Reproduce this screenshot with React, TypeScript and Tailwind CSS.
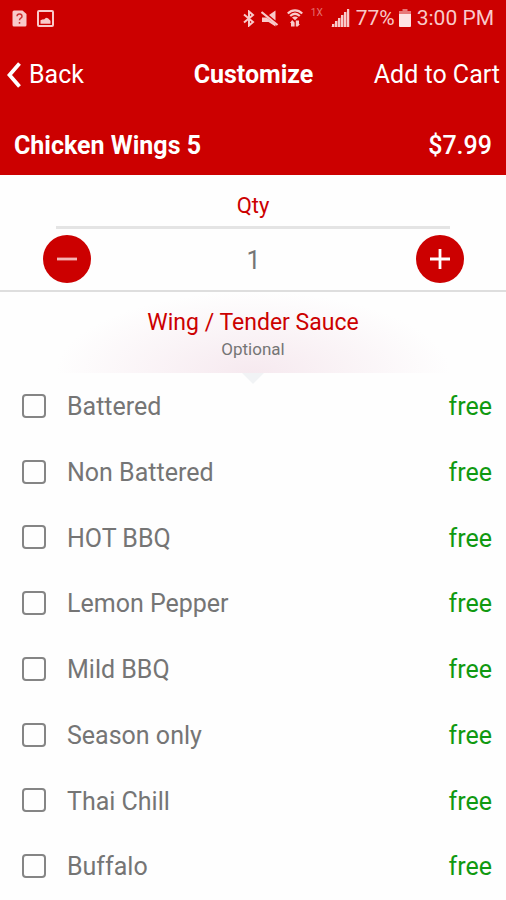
import { useState } from 'react';

const SAUCES = [
  'Battered',
  'Non Battered',
  'HOT BBQ',
  'Lemon Pepper',
  'Mild BBQ',
  'Season only',
  'Thai Chill',
  'Buffalo',
];

function StatusBar() {
  return (
    <div className="flex h-9 items-center justify-between px-3 text-[#f9caca]">
      <div className="flex items-center gap-2.5">
        {/* Unknown document */}
        <svg width="15" height="17" viewBox="0 0 15 17" fill="none">
          <path d="M2 0.5h8.5L14.500 4v11a1.500 1.500 0 0 1-1.500 1.500H2A1.500 1.500 0 0 1 .5 15V2A1.500 1.500 0 0 1 2 .5z" fill="currentColor" />
          <path d="M5 6.200a2.500 2.300 0 1 1 3.800 2c-.9.500-1.300.9-1.300 2M7.500 12v1.800" stroke="#cc3030" strokeWidth="1.500" />
        </svg>
        {/* Picture */}
        <svg width="17" height="17" viewBox="0 0 17 17" fill="none">
          <rect x="1" y="1" width="15" height="15" rx="1" stroke="currentColor" strokeWidth="2" />
          <path d="M3.500 13.800v-3.600l2.500-1 1 .3 2-1.800 2 .5 2.500 2.500v3.100z" fill="currentColor" />
        </svg>
      </div>
      <div className="flex items-center">
        {/* Bluetooth */}
        <svg className="mr-1.5" width="12" height="17" viewBox="0 0 12 17" fill="none" stroke="currentColor" strokeWidth="2">
          <path d="M1 4.500l9 7.500-4 3.500v-14l4 3.500-9 7.500" />
        </svg>
        {/* Muted speaker */}
        <svg className="mr-2" width="18" height="17" viewBox="0 0 18 17" fill="currentColor">
          <path d="M8 5l6.500-4.500v10zM1 7.500h4.500l9 6.500v2.500L7.500 12H1z" />
          <path d="M.5 2L16.500 15" stroke="currentColor" strokeWidth="2.200" />
        </svg>
        {/* Wi-Fi with traffic arrows */}
        <svg className="mr-2" width="16" height="18" viewBox="0 0 16 18" fill="none">
          <path d="M.8 4.500C5 .3 11 .3 15.200 4.500M3.200 7c3-2.800 6.600-2.800 9.600 0" stroke="currentColor" strokeWidth="2.200" />
          <path d="M5 8.500c1.800-1.300 4.200-1.300 6 0L8 11.200z" fill="currentColor" />
          <path d="M5.200 11l2.400 2.500V17.500H4V14H3zM8.800 11.500H12V15h1l-2.200 2.500h-2z" fill="currentColor" />
        </svg>
        <span className="mr-2 -mt-2.5 text-[10px] leading-none text-[#e57070]">1X</span>
        {/* Signal strength */}
        <svg className="mr-1.5" width="19" height="18" viewBox="0 0 19 18" fill="currentColor">
          <path d="M1 15h2v3H1zM4 12h2v6H4zM7 9h2v9H7zM10 6h2v12h-2zM13 3h2v15h-2zM16 0h2v18h-2z" />
          <path d="M0 18L18.500 0v18z" opacity="0.500" />
        </svg>
        <span className="text-[21px] leading-none">77%</span>
        {/* Battery */}
        <svg className="ml-1 mr-1.5" width="12" height="18" viewBox="0 0 12 18" fill="currentColor">
          <path d="M3.500 0h5v2H12v3H0V2h3.500z" opacity="0.600" />
          <path d="M0 5h12v12a1 1 0 0 1-1 1H1a1 1 0 0 1-1-1z" fill="#fde4e4" />
        </svg>
        <span className="text-[21px] leading-none">3:00 PM</span>
      </div>
    </div>
  );
}

export default function App() {
  const [qty, setQty] = useState(1);

  return (
    <div className="min-h-screen w-full bg-[#fefefe] font-['Roboto',sans-serif] text-[#757575]">
      <header className="bg-[#cc0000] text-white">
        <StatusBar />
        <nav className="grid h-[78px] grid-cols-[1fr_auto_1fr] items-center pl-[7px] pr-1.5 text-[25px]">
          <button type="button" className="flex items-center gap-2 justify-self-start">
            <svg width="14" height="26" viewBox="0 0 14 26" fill="none" stroke="currentColor" strokeWidth="3.800">
              <path d="M12.500 1.500L2.500 13l10 11.500" />
            </svg>
            Back
          </button>
          <h1 className="font-bold">Customize</h1>
          <button type="button" className="justify-self-end whitespace-nowrap">Add to Cart</button>
        </nav>
        <div className="flex h-[61px] items-center justify-between px-3.5 pt-0.5 text-[25px]">
          <h2 className="font-bold">Chicken Wings 5</h2>
          <span className="font-medium">$7.99</span>
        </div>
      </header>

      <section className="border-b-2 border-[#dedede]">
        <h3 className="mx-14 flex h-[54px] items-center justify-center border-b-3 border-[#e4e4e4] pt-2.5 text-[22px] text-[#cc0000]">
          Qty
        </h3>
        <div className="flex h-[61px] items-center justify-between pb-0.5 pl-[43px] pr-[42px]">
          <button
            type="button"
            aria-label="Decrease quantity"
            onClick={() => setQty(Math.max(1, qty - 1))}
            className="flex size-12 items-center justify-center rounded-full bg-[#cc0000] text-white"
          >
            <svg width="22" height="22" viewBox="0 0 22 22" stroke="#f5b5b5" strokeWidth="2.800">
              <path d="M1 11h20" />
            </svg>
          </button>
          <span aria-live="polite" className="pt-1 text-[25px]">{qty}</span>
          <button
            type="button"
            aria-label="Increase quantity"
            onClick={() => setQty(qty + 1)}
            className="flex size-12 items-center justify-center rounded-full bg-[#cc0000] text-white"
          >
            <svg width="22" height="22" viewBox="0 0 22 22" stroke="currentColor" strokeWidth="2.800">
              <path d="M1 11h20M11 1v20" />
            </svg>
          </button>
        </div>
      </section>

      <section>
        <div className="relative mx-14 flex h-[81px] flex-col items-center bg-[radial-gradient(ellipse_50%_100%_at_50%_100%,#f6e9ef,#fefefe)] pt-[15px] text-center">
          <h3 className="text-[23px] leading-8 text-[#cc0000]">Wing / Tender Sauce</h3>
          <p className="text-[17px] leading-5">Optional</p>
          <svg className="absolute left-1/2 top-full -translate-x-1/2" width="22" height="11" viewBox="0 0 22 11">
            <path d="M0 0h22L11 11z" fill="#f1f3f5" />
          </svg>
        </div>
        <ul className="grid min-h-[526px] auto-rows-fr">
          {SAUCES.map(name => (
            <li key={name} className="flex">
              <label className="flex flex-1 items-center pl-[22px] pr-3.5 text-[25px]">
                <input
                  type="checkbox"
                  className="mr-[21px] size-6 appearance-none rounded-[4px] border-2 border-[#858585] checked:bg-[#cc0000]"
                />
                <span className="flex-1 pt-0.5">{name}</span>
                <span className="pt-0.5 text-[#109910]">free</span>
              </label>
            </li>
          ))}
        </ul>
      </section>
    </div>
  );
}
